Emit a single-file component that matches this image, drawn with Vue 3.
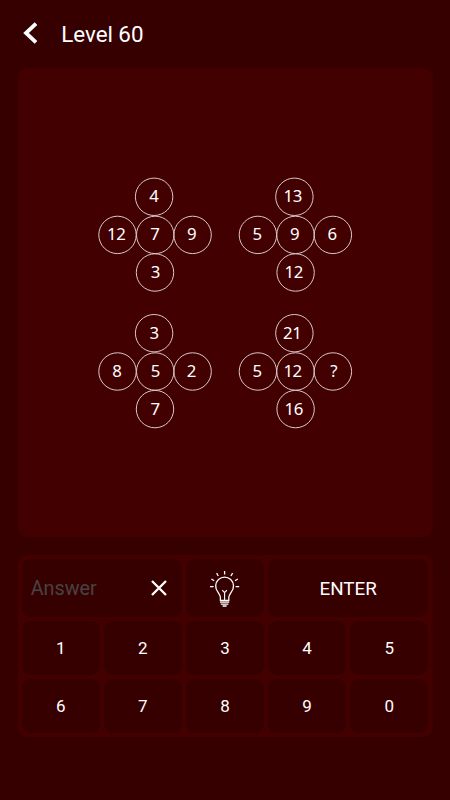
<script setup>
const cross = (circles) => circles.map(([label, cx, cy, tx, base]) => ({ label, cx, cy, tx, base }))

const groups = [
  cross([
    ['4', 153.6, 196.3, 153.3, 202],
    ['12', 117, 234.4, 115.7, 240],
    ['7', 154.7, 234.4, 154.4, 240],
    ['9', 192.1, 234.4, 191, 240],
    ['3', 154.5, 272, 154.7, 278],
  ]),
  cross([
    ['13', 293.9, 196.3, 292.2, 202],
    ['5', 257.4, 234.4, 256.6, 240],
    ['9', 295, 234.4, 294, 240],
    ['6', 332.4, 234.4, 331.5, 240],
    ['12', 295.1, 272, 293.2, 278],
  ]),
  cross([
    ['3', 153.6, 332.7, 153.6, 338.5],
    ['8', 117, 371, 116.2, 377],
    ['5', 154.7, 371, 154.8, 377],
    ['2', 192.1, 371, 190.9, 377],
    ['7', 154.5, 408.6, 154.6, 415],
  ]),
  cross([
    ['21', 293.9, 332.7, 291.7, 338.5],
    ['5', 257.4, 371, 256.6, 377],
    ['12', 295, 371, 292.1, 377],
    ['?', 332.4, 371, 333.1, 377],
    ['16', 295.1, 408.6, 293.2, 415],
  ]),
]

const digits = ['1', '2', '3', '4', '5', '6', '7', '8', '9', '0']
</script>

<template>
  <main class="screen">
    <header class="header">
      <svg class="back" viewBox="0 0 20 24" aria-label="Back">
        <path d="M16 2.6 6 12l10 9.4" />
      </svg>
      <h1 class="title">Level 60</h1>
    </header>

    <section class="board">
      <svg class="puzzle" viewBox="17.5 67.5 415 469.2">
        <g v-for="(group, g) in groups" :key="g">
          <template v-for="(c, i) in group" :key="i">
            <circle :cx="c.cx" :cy="c.cy" r="18.7" />
            <text :x="c.tx" :y="c.base">{{ c.label }}</text>
          </template>
        </g>
      </svg>
    </section>

    <section class="pad">
      <div class="key answer">
        <span class="placeholder">Answer</span>
        <svg class="clear" viewBox="0 0 18 18" aria-label="Clear">
          <path d="M2 2 16 16M16 2 2 16" />
        </svg>
      </div>
      <button class="key hint" aria-label="Hint">
        <svg class="bulb" viewBox="0 0 50 50">
          <path d="M20.400 37.500v-3c0-2.300-1.300-3.600-2.600-5.600a8.900 9 0 1 1 13.600 0c-1.300 2-2.600 3.300-2.600 5.600v3z" />
          <path class="thin" d="M24.600 37v-7.500l-2.400-2.300M24.600 29.500l2.400-2.300" />
          <path d="M20 39.200h9.200M20.800 41.200h7.600M22.600 43h4" />
          <path d="M24.600 8v3.400M16.600 10.200l1.700 2.800M32.600 10.200l-1.700 2.800M11.400 16l2.800 1.700M37.800 16l-2.800 1.700M10 23.600h3.600M35.600 23.600h3.600" />
        </svg>
      </button>
      <button class="key enter">ENTER</button>
      <button v-for="d in digits" :key="d" class="key digit">{{ d }}</button>
    </section>
  </main>
</template>

<style>
body {
  background: #360000;
}
</style>

<style scoped>
.screen {
  box-sizing: border-box;
  width: 450px;
  height: 800px;
  padding: 0 17.5px;
  background: #360000;
  color: #fff;
  font-family: Roboto, sans-serif;
}

.header {
  display: flex;
  align-items: center;
  height: 67.5px;
}

.back {
  width: 20px;
  height: 24px;
  margin: -2px 0 0 2px;
  fill: none;
  stroke: #fff;
  stroke-width: 3.8;
}

.title {
  margin: 0 0 0 21.8px;
  font-size: 22.4px;
  font-weight: 400;
  letter-spacing: -0.05px;
  line-height: 28px;
}

.board {
  height: 469.2px;
  border-radius: 9px;
  background: #420000;
}

.puzzle {
  display: block;
  width: 100%;
  height: 100%;
}

.puzzle circle {
  fill: none;
  stroke: #d9c9c9;
  stroke-width: 1;
}

.puzzle text {
  fill: #fff;
  font-family: "Noto Sans", sans-serif;
  font-size: 16.8px;
  letter-spacing: -0.5px;
  text-anchor: middle;
}

.pad {
  display: grid;
  box-sizing: border-box;
  grid-template-columns: repeat(5, 1fr);
  grid-template-rows: 58px 53.5px 53.5px;
  gap: 4.3px;
  height: 182px;
  margin-top: 18.2px;
  padding: 4.2px 4.4px;
  border-radius: 9px;
  background: #420000;
}

.key {
  display: flex;
  align-items: center;
  justify-content: center;
  margin: 0;
  padding: 0;
  border: 0;
  border-radius: 9px;
  background: #360000;
  color: #fff;
  font-family: inherit;
}

.answer {
  grid-column: span 2;
  justify-content: space-between;
  padding: 0 13.5px 0 8.8px;
}

.placeholder {
  margin-top: 2px;
  color: #484343;
  font-size: 19.8px;
  line-height: 24px;
}

.clear {
  width: 18px;
  height: 18px;
  fill: none;
  stroke: #fff;
  stroke-width: 2.3;
}

.bulb {
  width: 50px;
  height: 50px;
  fill: none;
  stroke: #fff;
  stroke-width: 1.3;
}

.bulb .thin {
  stroke-width: 1.1;
}

.enter {
  grid-column: span 2;
  padding-top: 1px;
  font-size: 18.8px;
}

.digit {
  font-size: 17px;
}
</style>
